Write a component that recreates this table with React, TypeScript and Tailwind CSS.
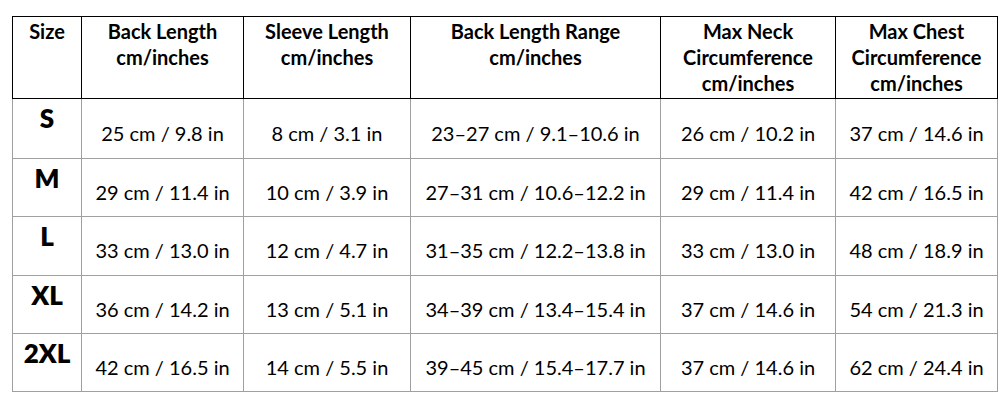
import React from 'react';

const headers = [
  ['Size'],
  ['Back Length', 'cm/inches'],
  ['Sleeve Length', 'cm/inches'],
  ['Back Length Range', 'cm/inches'],
  ['Max Neck', 'Circumference', 'cm/inches'],
  ['Max Chest', 'Circumference', 'cm/inches'],
];

const rows = [
  { size: 'S', h: 'h-[60px]', cells: ['25 cm / 9.8 in', '8 cm / 3.1 in', '23–27 cm / 9.1–10.6 in', '26 cm / 10.2 in', '37 cm / 14.6 in'] },
  { size: 'M', h: 'h-[58px]', cells: ['29 cm / 11.4 in', '10 cm / 3.9 in', '27–31 cm / 10.6–12.2 in', '29 cm / 11.4 in', '42 cm / 16.5 in'] },
  { size: 'L', h: 'h-[59px]', cells: ['33 cm / 13.0 in', '12 cm / 4.7 in', '31–35 cm / 12.2–13.8 in', '33 cm / 13.0 in', '48 cm / 18.9 in'] },
  { size: 'XL', h: 'h-[58px]', cells: ['36 cm / 14.2 in', '13 cm / 5.1 in', '34–39 cm / 13.4–15.4 in', '37 cm / 14.6 in', '54 cm / 21.3 in'] },
  { size: '2XL', h: 'h-[58px]', cells: ['42 cm / 16.5 in', '14 cm / 5.5 in', '39–45 cm / 15.4–17.7 in', '37 cm / 14.6 in', '62 cm / 24.4 in'] },
];

const widths = ['w-[69px]', 'w-[162px]', 'w-[167px]', 'w-[250px]', 'w-[175px]', 'w-[162px]'];

export default function App() {
  return (
    <div className="w-[1007px] h-[404px] bg-white pt-4 pl-3 font-['Lato','Liberation_Sans',sans-serif] text-black">
      <table className="border-collapse table-fixed w-[985px]">
        <colgroup>
          {widths.map((w, i) => (
            <col key={i} className={w} />
          ))}
        </colgroup>
        <thead>
          <tr className="h-[82px]">
            {headers.map((lines, i) => (
              <th
                key={i}
                className="border border-black align-top text-center font-bold text-[20px] leading-[26px] pt-[1px] px-1"
              >
                {lines.map((l, j) => (
                  <div key={j}>{l}</div>
                ))}
              </th>
            ))}
          </tr>
        </thead>
        <tbody>
          {rows.map((r) => (
            <tr key={r.size} className={r.h}>
              <td className="border border-[#a0a0a0] align-top text-center font-extrabold text-[26px] leading-[30px] pt-[4px]">
                {r.size}
              </td>
              {r.cells.map((c, i) => (
                <td
                  key={i}
                  className="border border-[#a0a0a0] align-middle text-center text-[20px] pt-[8px] whitespace-nowrap"
                >
                  {c}
                </td>
              ))}
            </tr>
          ))}
        </tbody>
      </table>
    </div>
  );
}
